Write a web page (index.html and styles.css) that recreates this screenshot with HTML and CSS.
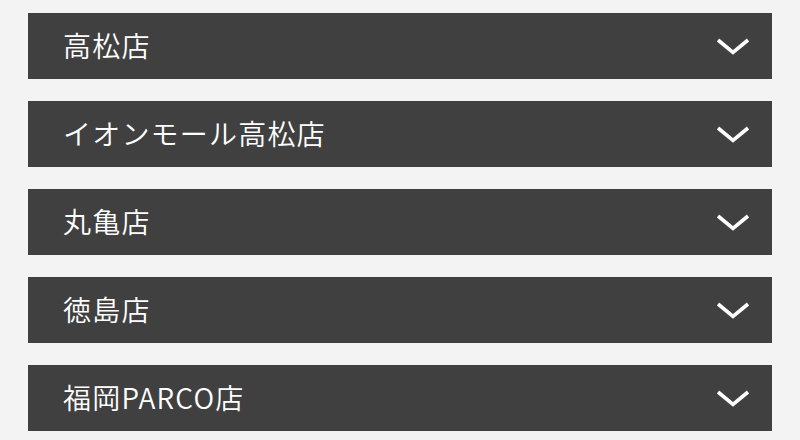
FILE: index.html
```html
<!DOCTYPE html>
<html lang="ja">
<head>
<meta charset="utf-8">
<link rel="stylesheet" href="styles.css">
</head>
<body>
<ul class="list">
  <li class="item"><span class="name">高松店</span><svg class="chev" viewBox="0 0 34 17" width="34" height="17"><path d="M2 2 L17 14.5 L32 2" fill="none" stroke="#fff" stroke-width="3.6"/></svg></li>
  <li class="item"><span class="name">イオンモール高松店</span><svg class="chev" viewBox="0 0 34 17" width="34" height="17"><path d="M2 2 L17 14.5 L32 2" fill="none" stroke="#fff" stroke-width="3.6"/></svg></li>
  <li class="item"><span class="name">丸亀店</span><svg class="chev" viewBox="0 0 34 17" width="34" height="17"><path d="M2 2 L17 14.5 L32 2" fill="none" stroke="#fff" stroke-width="3.6"/></svg></li>
  <li class="item"><span class="name">徳島店</span><svg class="chev" viewBox="0 0 34 17" width="34" height="17"><path d="M2 2 L17 14.5 L32 2" fill="none" stroke="#fff" stroke-width="3.6"/></svg></li>
  <li class="item"><span class="name">福岡PARCO店</span><svg class="chev" viewBox="0 0 34 17" width="34" height="17"><path d="M2 2 L17 14.5 L32 2" fill="none" stroke="#fff" stroke-width="3.6"/></svg></li>
</ul>
</body>
</html>
```
FILE: styles.css
```css
html, body {
  margin: 0;
  padding: 0;
  background: #f3f3f3;
}
body {
  font-family: "Noto Sans CJK JP", "Noto Sans", sans-serif;
}
.list {
  list-style: none;
  margin: 0;
  padding: 13px 28px 0;
  display: flex;
  flex-direction: column;
  gap: 22px;
}
.item {
  height: 66px;
  background: #404040;
  color: #fff;
  display: flex;
  align-items: center;
  justify-content: space-between;
  padding: 0 22px 0 35px;
}
.name {
  font-size: 28px;
  font-weight: 350;
  letter-spacing: 1.2px;
  line-height: 1;
  margin-top: -2px;
}
.chev {
  display: block;
}
```
